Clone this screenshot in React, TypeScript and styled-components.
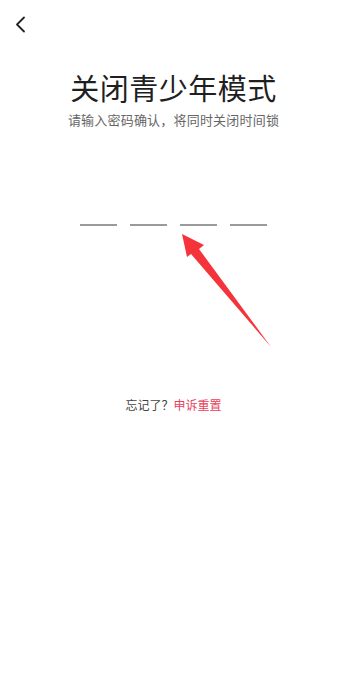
import React from "react";
import styled, { createGlobalStyle } from "styled-components";

const Global = createGlobalStyle`
  html, body { margin: 0; padding: 0; background: #fff; }
  body { font-family: "Noto Sans CJK SC", "Noto Sans", sans-serif; }
`;

const Page = styled.div`
  position: relative;
  width: 347px;
  height: 699px;
  background: #fff;
  display: flex;
  flex-direction: column;
  align-items: center;
  overflow: hidden;
`;

const Header = styled.div`
  align-self: stretch;
  height: 48px;
  display: flex;
  align-items: center;
  padding-left: 12px;
`;

const BackButton = styled.button`
  border: 0;
  background: none;
  padding: 0;
  width: 16px;
  height: 20px;
  margin-top: 1px;
  display: flex;
  align-items: center;
  justify-content: center;
  cursor: pointer;
`;

const Title = styled.h1`
  margin: 21px 0 0;
  font-size: 29px;
  line-height: 36px;
  font-weight: 400;
  color: #1f1f1f;
  letter-spacing: 0.5px;
`;

const Subtitle = styled.p`
  margin: 6px 0 0;
  font-size: 13px;
  line-height: 18px;
  color: #666;
  letter-spacing: 0.2px;
`;

const CodeRow = styled.div`
  margin-top: 95px;
  display: flex;
  gap: 12.5px;
`;

const CodeSlot = styled.div`
  width: 37.5px;
  height: 2px;
  background: #9a9a9a;
`;

const Forgot = styled.p`
  margin: 170px 0 0;
  font-size: 12px;
  line-height: 17px;
  color: #444;
`;

const ResetLink = styled.span`
  color: #e8415b;
`;

const Arrow = styled.svg`
  position: absolute;
  left: 0;
  top: 0;
  pointer-events: none;
`;

export default function App() {
  return (
    <>
      <Global />
      <Page>
        <Header>
          <BackButton aria-label="返回">
            <svg width="12" height="18" viewBox="0 0 12 18">
              <path d="M10 1.5 L3 8.5 L10 15.5" fill="none" stroke="#222" strokeWidth="1.8" strokeLinecap="round" strokeLinejoin="round" />
            </svg>
          </BackButton>
        </Header>
        <Title>关闭青少年模式</Title>
        <Subtitle>请输入密码确认，将同时关闭时间锁</Subtitle>
        <CodeRow>
          <CodeSlot />
          <CodeSlot />
          <CodeSlot />
          <CodeSlot />
        </CodeRow>
        <Forgot>
          忘记了？<ResetLink>申诉重置</ResetLink>
        </Forgot>
        <Arrow width="347" height="699" viewBox="0 0 347 699">
          <polygon
            points="182,234 204,245 199,249 271,347 191,254 187,257"
            fill="#f5333b"
          />
        </Arrow>
      </Page>
    </>
  );
}
